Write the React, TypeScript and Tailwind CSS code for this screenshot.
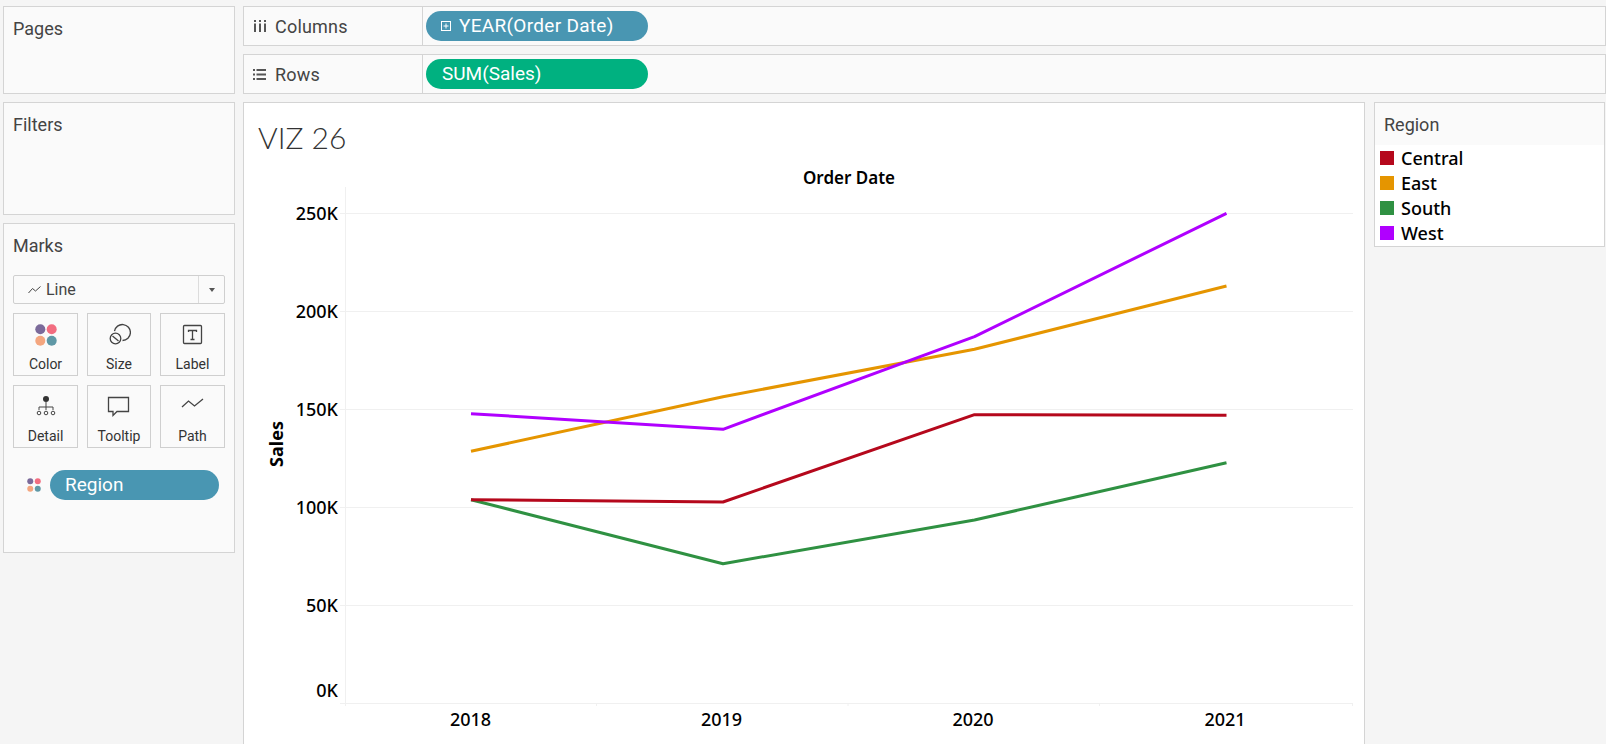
const BLUE_PILL = "bg-[#4996b2]";
const GREEN_PILL = "bg-[#00b180]";

const YEAR_X = [471, 723, 974.5, 1226.5];
const YEAR_LABELS = [
  { label: "2018", x: 470.5 },
  { label: "2019", x: 721.5 },
  { label: "2020", x: 973 },
  { label: "2021", x: 1225 },
];
const Y_TICKS = [
  { label: "250K", y: 213, base: 219.5 },
  { label: "200K", y: 311, base: 317.5 },
  { label: "150K", y: 409, base: 415.5 },
  { label: "100K", y: 507, base: 513.5 },
  { label: "50K", y: 605, base: 611.5 },
  { label: "0K", y: 703, base: 697 },
];

const SERIES = [
  { name: "East", color: "#e59500", ys: [451.3, 396.7, 349.3, 286] },
  { name: "West", color: "#b000ff", ys: [413.7, 429.3, 336.7, 213.3] },
  { name: "South", color: "#2f9142", ys: [499.7, 563.7, 520, 462.7] },
  { name: "Central", color: "#b5081c", ys: [499.7, 502, 414.7, 415.3] },
];

const LEGEND = [
  { name: "Central", swatch: "bg-[#b5081c]" },
  { name: "East", swatch: "bg-[#e59500]" },
  { name: "South", swatch: "bg-[#2f9142]" },
  { name: "West", swatch: "bg-[#b000ff]" },
];

function Panel({ title, className, children }: { title: string; className: string; children?: React.ReactNode }) {
  return (
    <section className={`border border-[#d4d4d4] bg-[#fafafa] ${className}`}>
      <h2 className="pl-[9px] pt-[11px] text-[18px] leading-[22px] text-[#444]">{title}</h2>
      {children}
    </section>
  );
}

function ColorDots({ size, r, gap }: { size: number; r: number; gap: number }) {
  const a = size / 2 - gap / 2;
  const b = size / 2 + gap / 2;
  return (
    <svg width={size} height={size} viewBox={`0 0 ${size} ${size}`}>
      <circle cx={a} cy={a} r={r} fill="#7b6a9a" />
      <circle cx={b} cy={a} r={r} fill="#f26d80" />
      <circle cx={a} cy={b} r={r} fill="#f4a67f" />
      <circle cx={b} cy={b} r={r} fill="#5f98a6" />
    </svg>
  );
}

function SizeIcon() {
  return (
    <svg width="24" height="24" viewBox="0 0 24 24" fill="none" stroke="#444" strokeWidth="1.3">
      <path d="M7.5 8.2A8 8 0 1 1 15.5 17.5" />
      <circle cx="8.5" cy="15.5" r="5.3" />
      <path d="M5.5 13 11.5 18" />
    </svg>
  );
}

function LabelIcon() {
  return (
    <svg width="24" height="24" viewBox="0 0 24 24" fill="none" stroke="#444">
      <rect x="2.5" y="2.5" width="18" height="18" rx="1" strokeWidth="1.3" />
      <path d="M7.5 9V7.5h8V9M11.5 7.5v9M9.5 16.5h4" strokeWidth="1.3" />
    </svg>
  );
}

function DetailIcon() {
  return (
    <svg width="24" height="24" viewBox="0 0 24 24" fill="none" stroke="#444" strokeWidth="1">
      <circle cx="12" cy="4" r="3" fill="#333" stroke="none" />
      <path d="M12 6v9M5 15v-3h14v3M12 15v0" />
      <circle cx="5" cy="18" r="1.8" />
      <circle cx="12" cy="18" r="1.8" />
      <circle cx="19" cy="18" r="1.8" />
    </svg>
  );
}

function TooltipIcon() {
  return (
    <svg width="24" height="24" viewBox="0 0 24 24" fill="none" stroke="#444" strokeWidth="1.3">
      <path d="M1.5 2.5h20v14H10l-4 4v-4H1.5z" />
    </svg>
  );
}

function PathIcon() {
  return (
    <svg width="24" height="24" viewBox="0 0 24 24" fill="none" stroke="#444" strokeWidth="1.3">
      <path d="M1 12 7.5 6l6 5 8.5-7" />
    </svg>
  );
}

function MarkCard({ label, icon, className }: { label: string; icon: React.ReactNode; className: string }) {
  return (
    <div className={`flex h-[63px] flex-col items-center border border-[#cfcfcf] bg-[#fafafa] ${className}`}>
      <div className="mt-[9px] flex h-[24px] w-[24px] items-center justify-center">{icon}</div>
      <span className="mt-[9px] text-[14px] leading-[16px] text-[#333]">{label}</span>
    </div>
  );
}

function MarksPanel() {
  return (
    <Panel title="Marks" className="h-[330px]">
      <div className="mx-[9px] mt-[18px]">
        <div className="flex h-[29px] items-center rounded-[2px] border border-[#cfcfcf] bg-[#fafafa]">
          <div className="flex flex-1 items-center pl-[14px] text-[16px] text-[#444]">
            <svg width="13" height="10" viewBox="0 0 13 10" fill="none" stroke="#444" strokeWidth="1">
              <path d="M0.5 8 4.5 3.5l3 2.5 5-4.5" />
            </svg>
            <span className="ml-[5px]">Line</span>
          </div>
          <div className="flex h-full w-[26px] items-center justify-center border-l border-[#dcdcdc]">
            <div className="h-0 w-0 border-x-[3.5px] border-t-[4px] border-x-transparent border-t-[#555]" />
          </div>
        </div>
        <div className="mt-[9px] flex">
          <MarkCard label="Color" icon={<ColorDots size={24} r={5} gap={11.4} />} className="w-[65px]" />
          <MarkCard label="Size" icon={<SizeIcon />} className="ml-[9px] w-[64px]" />
          <MarkCard label="Label" icon={<LabelIcon />} className="ml-[9px] w-[65px]" />
        </div>
        <div className="mt-[9px] flex">
          <MarkCard label="Detail" icon={<DetailIcon />} className="w-[65px]" />
          <MarkCard label="Tooltip" icon={<TooltipIcon />} className="ml-[9px] w-[64px]" />
          <MarkCard label="Path" icon={<PathIcon />} className="ml-[9px] w-[65px]" />
        </div>
        <div className="mt-[22px] flex items-center pl-[13px]">
          <ColorDots size={16} r={3} gap={7.5} />
          <div className={`ml-[8px] flex h-[30px] w-[169px] items-center rounded-full pl-[15px] text-[19px] text-white ${BLUE_PILL}`}>
            Region
          </div>
        </div>
      </div>
    </Panel>
  );
}

function Shelf({ label, icon, children }: { label: string; icon: React.ReactNode; children: React.ReactNode }) {
  return (
    <div className="flex h-[40px] border border-[#d4d4d4] bg-[#fafafa]">
      <div className="flex w-[179px] items-center border-r border-[#d4d4d4] pl-[9px] text-[18px] tracking-[0.2px] text-[#444]">
        <div className="flex w-[13px] justify-center">{icon}</div>
        <span className="ml-[9px]">{label}</span>
      </div>
      <div className="pl-[3px] pt-[4px]">{children}</div>
    </div>
  );
}

function Chart() {
  return (
    <svg width="1120" height="584" viewBox="244 160 1120 584" className="block">
      <path d="M345.5 187V706M340 703.5H1353M596.5 703V706M848 703V706M1099.5 703V706M1352.5 703V706" stroke="#f0f0f0" />
      {Y_TICKS.map((t) => (
        <g key={t.label}>
          <path d={`M340 ${t.y + 0.5}H1353`} stroke="#f0f0f0" />
          <text x="338" y={t.base} textAnchor="end" fontSize="18" fontWeight="500" fill="#000">{t.label}</text>
        </g>
      ))}
      {YEAR_LABELS.map((year) => (
        <text key={year.label} x={year.x} y="725.5" textAnchor="middle" fontSize="18" fontWeight="500" fill="#000">{year.label}</text>
      ))}
      <text x="849" y="184" textAnchor="middle" fontSize="17" fontWeight="600" fill="#000">Order Date</text>
      <text transform="translate(283 444) rotate(-90)" textAnchor="middle" fontSize="18" fontWeight="700" fill="#000">Sales</text>
      {SERIES.map((s) => (
        <polyline
          key={s.name}
          points={s.ys.map((y, i) => `${YEAR_X[i]},${y}`).join(" ")}
          fill="none"
          stroke={s.color}
          strokeWidth="3"
          strokeLinejoin="round"
        />
      ))}
    </svg>
  );
}

export default function App() {
  return (
    <div className="flex h-[744px] w-[1606px] overflow-hidden bg-[#f5f5f5] pl-[3px] pt-[6px] font-['Roboto',sans-serif]">
      <aside className="flex w-[232px] shrink-0 flex-col gap-[8px]">
        <Panel title="Pages" className="h-[88px]" />
        <Panel title="Filters" className="h-[113px]" />
        <MarksPanel />
      </aside>
      <main className="ml-[8px] flex min-w-0 flex-1 flex-col gap-[8px]">
        <Shelf
          label="Columns"
          icon={
            <svg width="12" height="12" viewBox="0 0 12 12" fill="#555">
              <path d="M0 3.5h2V12H0zM0 0h2v2H0zM5 3.5h2V12H5zM5 0h2v2H5zM10 3.5h2V12h-2zM10 0h2v2h-2z" />
            </svg>
          }
        >
          <div className={`flex h-[30px] w-[222px] items-center rounded-full pl-[15px] text-[19px] tracking-[0.3px] text-white ${BLUE_PILL}`}>
            <svg width="10" height="10" viewBox="0 0 10 10" fill="none" stroke="#fff" strokeWidth="1">
              <rect x="0.5" y="0.5" width="9" height="9" />
              <path d="M2.5 5h5M5 2.5v5" />
            </svg>
            <span className="ml-[8px]">YEAR(Order Date)</span>
          </div>
        </Shelf>
        <Shelf
          label="Rows"
          icon={
            <svg width="13" height="11" viewBox="0 0 13 11" fill="#555">
              <path d="M0 0h2v2H0zM3.5 0H13v2H3.5zM0 4.5h2v2H0zM3.5 4.5H13v2H3.5zM0 9h2v2H0zM3.5 9H13v2H3.5z" />
            </svg>
          }
        >
          <div className={`flex h-[30px] w-[222px] items-center rounded-full pl-[16px] text-[19px] text-white ${GREEN_PILL}`}>
            SUM(Sales)
          </div>
        </Shelf>
        <div className="flex min-h-0 flex-1 items-start">
          <section className="h-[660px] w-[1122px] shrink-0 border border-[#d4d4d4] bg-white font-['Noto_Sans',sans-serif]">
            <h1 className="h-[57px] pl-[14px] pt-[16px] font-['Lato',sans-serif] text-[30px] font-light leading-[36px] text-[#333]">
              VIZ 26
            </h1>
            <Chart />
          </section>
          <section className="ml-[9px] h-[145px] w-[231px] shrink-0 border border-[#d4d4d4] bg-white">
            <h2 className="h-[42px] bg-[#fafafa] pl-[9px] pt-[10px] text-[18px] leading-[24px] text-[#444]">Region</h2>
            <ul className="pl-[5px] font-['Noto_Sans',sans-serif] text-[18px] font-medium text-black">
              {LEGEND.map((item) => (
                <li key={item.name} className="flex h-[25px] items-center">
                  <span className={`h-[14px] w-[14px] ${item.swatch}`} />
                  <span className="ml-[7px] mt-[2px]">{item.name}</span>
                </li>
              ))}
            </ul>
          </section>
        </div>
      </main>
    </div>
  );
}
